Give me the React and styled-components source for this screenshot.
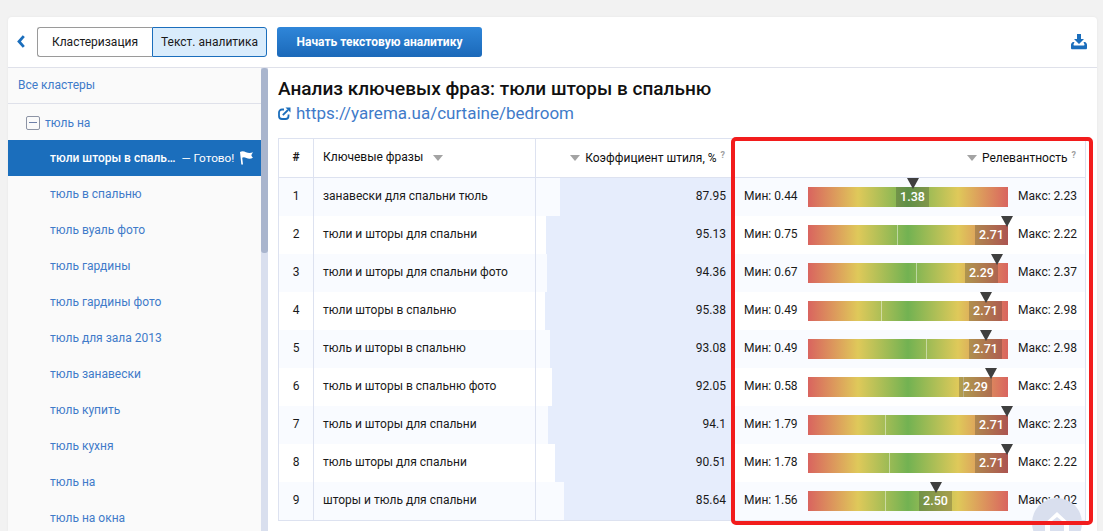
import React from "react";
import styled, { createGlobalStyle } from "styled-components";

const Global = createGlobalStyle`
  html, body { margin: 0; padding: 0; height: 531px; overflow: hidden; background: #f2f2f2; }
  body { font-family: Roboto, "Liberation Sans", sans-serif; color: #1a1a1a; }
  * { box-sizing: border-box; }
`;

const Page = styled.div`
  position: relative;
  height: 531px;
  padding: 17px 6px 0 8px;
  overflow: hidden;
`;
const Card = styled.div`
  height: 514px;
  background: #fff;
  border-radius: 4px 4px 0 0;
  display: flex;
  flex-direction: column;
  box-shadow: 0 0 3px rgba(0,0,0,.05);
`;
const Toolbar = styled.div`
  height: 51px;
  flex: none;
  display: flex;
  align-items: center;
  padding: 0 10px 1px 9px;
  border-bottom: 1px solid #dfe1ea;
`;
const Back = styled.svg`
  width: 8px;
  height: 13px;
  margin-right: 12px;
  flex: none;
`;
const Tab = styled.div`
  width: 115px;
  height: 30px;
  font-size: 12px;
  display: flex;
  align-items: center;
  justify-content: center;
  border: 1px solid ${p => (p.$active ? "#1b6ebc" : "#9a9a9a")};
  border-right-width: ${p => (p.$active ? 1 : 0)}px;
  background: ${p => (p.$active ? "#d9ecfc" : "#fff")};
  border-radius: ${p => (p.$active ? "0 3px 3px 0" : "3px 0 0 3px")};
`;
const StartButton = styled.div`
  width: 205px;
  height: 30px;
  margin-left: 10px;
  border-radius: 3px;
  background: linear-gradient(#2f86d9, #1b69b9);
  color: #fff;
  font-size: 12px;
  font-weight: 700;
  display: flex;
  align-items: center;
  justify-content: center;
`;
const DownloadIcon = styled.svg`
  width: 16px;
  height: 16px;
  margin-left: auto;
  flex: none;
`;
const Body = styled.div`
  flex: 1;
  min-height: 0;
  display: flex;
`;
const Sidebar = styled.aside`
  width: 253px;
  flex: none;
  background: #fafafa;
  overflow: hidden;
`;
const AllClusters = styled.div`
  height: 36px;
  padding: 0 0 2px 10px;
  display: flex;
  align-items: center;
  border-bottom: 1px solid #dfe1ea;
  font-size: 12px;
  color: #3f7bc9;
`;
const Parent = styled.div`
  height: 36px;
  padding: 1px 0 0 18px;
  display: flex;
  align-items: center;
  font-size: 12px;
  color: #3f7bc9;
`;
const Minus = styled.span`
  width: 14px;
  height: 14px;
  margin-right: 5px;
  border: 1px solid #8d94a5;
  border-radius: 2px;
  display: flex;
  align-items: center;
  justify-content: center;
  &::before { content: ""; width: 8px; height: 1.5px; background: #6d7fa8; }
`;
const Item = styled.div`
  height: 36px;
  padding: 0 7px 0 42px;
  display: flex;
  align-items: center;
  font-size: 12px;
  white-space: nowrap;
  color: #3f7bc9;
`;
const ActiveItem = styled(Item)`
  background: #1b6ebc;
  color: #fff;
  font-weight: 500;
`;
const Done = styled.span`
  margin-left: 6px;
  font-weight: 400;
  font-size: 11.8px;
`;
const Flag = styled.svg`
  width: 15px;
  height: 14px;
  margin-left: auto;
  flex: none;
`;
const Track = styled.div`
  width: 7px;
  flex: none;
  background: #d9dfee;
`;
const Thumb = styled.div`
  height: 185px;
  background: #a9b5cd;
  border-radius: 3px;
`;
const Content = styled.main`
  flex: 1;
  min-width: 0;
  padding: 10px 11px 0 10px;
`;
const Title = styled.h1`
  margin: 0;
  font-size: 19px;
  line-height: 22px;
  font-weight: 500;
  color: #111;
`;
const UrlRow = styled.div`
  display: flex;
  align-items: center;
  height: 24px;
  margin-top: 1px;
  margin-bottom: 13px;
`;
const LinkIcon = styled.svg`
  width: 13px;
  height: 13px;
  margin-right: 5px;
  flex: none;
`;
const Url = styled.span`
  font-size: 17px;
  color: #3f7bc9;
`;
const Table = styled.div`
  border: 1px solid #dde2f0;
`;
const Row = styled.div`
  display: grid;
  grid-template-columns: 35px 222px 197px 352px;
  height: 38px;
  background: ${p => (p.$odd ? "#f9fbff" : "#fff")};
`;
const HeadRow = styled(Row)`
  background: #fff;
  border-bottom: 1px solid #dde2f0;
  height: 39px;
`;
const NumCell = styled.div`
  display: flex;
  align-items: center;
  justify-content: center;
  padding-bottom: 2px;
  font-size: 12px;
  font-weight: ${p => (p.$head ? 700 : 400)};
  border-right: 1px solid #dde2f0;
`;
const PhraseCell = styled.div`
  display: flex;
  align-items: center;
  padding: 0 0 2px 9px;
  font-size: 12px;
  border-right: 1px solid #dde2f0;
`;
const HeadText = styled.span`
  font-size: 12px;
  font-weight: 400;
  color: #111;
`;
const Caret = styled.i`
  display: inline-block;
  width: 0;
  height: 0;
  border-left: 5px solid transparent;
  border-right: 5px solid transparent;
  border-top: 6px solid #a3a3a3;
  margin: ${p => p.$m};
`;
const Help = styled.sup`
  font-size: 9px;
  font-weight: 700;
  color: #a0a0a0;
  margin-left: 4px;
  position: relative;
  top: -3px;
  line-height: 0;
`;
const HeadRight = styled.div`
  display: flex;
  align-items: center;
  justify-content: flex-end;
  padding: 0 ${p => p.$pr}px 1px 0;
`;
const CoefCell = styled.div`
  position: relative;
  display: flex;
  align-items: center;
  justify-content: flex-end;
  padding: 0 7px 2px 0;
  font-size: 12px;
`;
const CoefBar = styled.div`
  position: absolute;
  top: 0;
  bottom: 0;
  right: 0;
  background: #e6edfc;
`;
const CoefValue = styled.span`
  position: relative;
`;
const RelCell = styled.div`
  display: flex;
  align-items: center;
  padding-left: 11px;
  font-size: 12px;
`;
const MinLabel = styled.span`
  width: 64px;
  flex: none;
  padding-bottom: 2px;
`;
const MaxLabel = styled.span`
  margin-left: 10px;
  padding-bottom: 2px;
`;
const Bar = styled.div`
  position: relative;
  width: 200px;
  height: 20px;
  flex: none;
  background: linear-gradient(90deg, #d9645f 0%, #dfc95a 25%, #72b252 50%, #dfc95a 75%, #d9645f 100%);
`;
const BarLine = styled.div`
  position: absolute;
  top: 0;
  bottom: 0;
  width: 1px;
  background: rgba(255,255,255,.45);
`;
const Badge = styled.div`
  position: absolute;
  top: 0;
  bottom: 0;
  width: 33px;
  padding-bottom: 2px;
  background: rgba(40,40,40,.25);
  color: #fff;
  font-size: 12.5px;
  font-weight: 500;
  display: flex;
  align-items: center;
  justify-content: center;
`;
const Pointer = styled.div`
  position: absolute;
  top: -9px;
  width: 0;
  height: 0;
  margin-left: -6px;
  border-left: 6px solid transparent;
  border-right: 6px solid transparent;
  border-top: 11px solid #3f3f3f;
`;
const Highlight = styled.div`
  position: absolute;
  left: 731px;
  top: 137px;
  width: 362px;
  height: 388px;
  border: 4px solid #f21c1c;
  border-radius: 5px;
  pointer-events: none;
`;
const ScrollTop = styled.svg`
  position: absolute;
  left: 1032px;
  top: 498px;
  width: 50px;
  height: 50px;
`;

const rows = [
  ["занавески для спальни тюль", 87.95, "0.44", "2.23", "1.38", 88, 105, null],
  ["тюли и шторы для спальни", 95.13, "0.75", "2.22", "2.71", 167, 199, 89],
  ["тюли и шторы для спальни фото", 94.36, "0.67", "2.37", "2.29", 157, 189, 108],
  ["тюли шторы в спальню", 95.38, "0.49", "2.98", "2.71", 161, 178, 73],
  ["тюль и шторы в спальню", 93.08, "0.49", "2.98", "2.71", 161, 178, 118],
  ["тюль и шторы в спальню фото", 92.05, "0.58", "2.43", "2.29", 151, 183, 155],
  ["тюль и шторы для спальни", 94.1, "1.79", "2.23", "2.71", 167, 199, 77],
  ["тюль шторы для спальни", 90.51, "1.78", "2.22", "2.71", 167, 199, 81],
  ["шторы и тюль для спальни", 85.64, "1.56", "2.02", "2.50", 111, 128, 77],
];

const items = [
  "тюль в спальню", "тюль вуаль фото", "тюль гардины", "тюль гардины фото",
  "тюль для зала 2013", "тюль занавески", "тюль купить", "тюль кухня", "тюль на", "тюль на окна",
];

export default function App() {
  return (
    <Page>
      <Global />
      <Card>
        <Toolbar>
          <Back viewBox="0 0 8 13">
            <path d="M6.800 1.100 2 6.500l4.800 5.400" fill="none" stroke="#1b6ebc" strokeWidth="2.800" />
          </Back>
          <Tab>Кластеризация</Tab>
          <Tab $active>Текст. аналитика</Tab>
          <StartButton>Начать текстовую аналитику</StartButton>
          <DownloadIcon viewBox="0 0 16 16">
            <path d="M6 0h4v5h3l-5 5-5-5h3z" fill="#1b6ebc" />
            <path d="M0 11c0-1.200.8-2.500 2-3h1.500L2.600 10.200c-.3.6 0 1.300.8 1.300h9.200c.8 0 1.100-.7.800-1.300L12.500 8H14c1.200.5 2 1.800 2 3v3c0 .8-.5 1.300-1.300 1.300H1.300C.5 15.300 0 14.800 0 14z" fill="#1b6ebc" />
          </DownloadIcon>
        </Toolbar>
        <Body>
          <Sidebar>
            <AllClusters>Все кластеры</AllClusters>
            <Parent><Minus />тюль на</Parent>
            <ActiveItem>
              тюли шторы в спаль…<Done>— Готово!</Done>
              <Flag viewBox="0 0 15 14">
                <path d="M1 1c2-1.200 4-.8 6 .2 2.500 1.100 4.500 1 7 .1-.9 1.300-1.500 2.300-1.600 3.200.3.800.8 1.500 1.600 2.300-2.500 1.200-4.500 1.100-6.600.1C5.500 6 4.300 6 3.200 6.700L4 13.500H2.300z" fill="#fff" />
              </Flag>
            </ActiveItem>
            {items.map(t => <Item key={t}>{t}</Item>)}
          </Sidebar>
          <Track><Thumb /></Track>
          <Content>
            <Title>Анализ ключевых фраз: тюли шторы в спальню</Title>
            <UrlRow>
              <LinkIcon viewBox="0 0 13 13">
                <path d="M6 2.500H4a3 3 0 0 0-3 3V9a3 3 0 0 0 3 3h3.500a3 3 0 0 0 3-3V7.500" fill="none" stroke="#1b6ebc" strokeWidth="1.800" />
                <path d="M4.800 8.200 10 3" stroke="#1b6ebc" strokeWidth="1.800" />
                <path d="M7.500 .6h5v5z" fill="#1b6ebc" />
              </LinkIcon>
              <Url>https://yarema.ua/curtaine/bedroom</Url>
            </UrlRow>
            <Table>
              <HeadRow>
                <NumCell $head>#</NumCell>
                <PhraseCell>
                  <HeadText>Ключевые фразы</HeadText>
                  <Caret $m="1px 0 0 10px" />
                </PhraseCell>
                <HeadRight $pr={8}>
                  <Caret $m="1px 5px 0 0" />
                  <HeadText>Коэффициент штиля, %</HeadText>
                  <Help>?</Help>
                </HeadRight>
                <HeadRight $pr={9}>
                  <Caret $m="1px 5px 0 0" />
                  <HeadText>Релевантность</HeadText>
                  <Help>?</Help>
                </HeadRight>
              </HeadRow>
              {rows.map((r, i) => (
                <Row key={r[0]} $odd={i % 2 === 0}>
                  <NumCell>{i + 1}</NumCell>
                  <PhraseCell>{r[0]}</PhraseCell>
                  <CoefCell>
                    <CoefBar style={{ width: `${r[1]}%` }} />
                    <CoefValue>{r[1]}</CoefValue>
                  </CoefCell>
                  <RelCell>
                    <MinLabel>Мин: {r[2]}</MinLabel>
                    <Bar>
                      {r[7] !== null && <BarLine style={{ left: r[7] }} />}
                      <Badge style={{ left: r[5] }}>{r[4]}</Badge>
                      <Pointer style={{ left: r[6] }} />
                    </Bar>
                    <MaxLabel>Макс: {r[3]}</MaxLabel>
                  </RelCell>
                </Row>
              ))}
            </Table>
          </Content>
        </Body>
      </Card>
      <ScrollTop viewBox="0 0 50 50">
        <circle cx="25" cy="25" r="25" fill="#d9dfee" />
        <path d="M25 14 11 27l4 0 10-8 10 8 4 0z" fill="#fff" />
        <path d="M13 27h5v10a2.500 2.500 0 0 1-5 0zM32 27h5v10a2.500 2.500 0 0 1-5 0z" fill="#fff" />
      </ScrollTop>
      <Highlight />
    </Page>
  );
}
